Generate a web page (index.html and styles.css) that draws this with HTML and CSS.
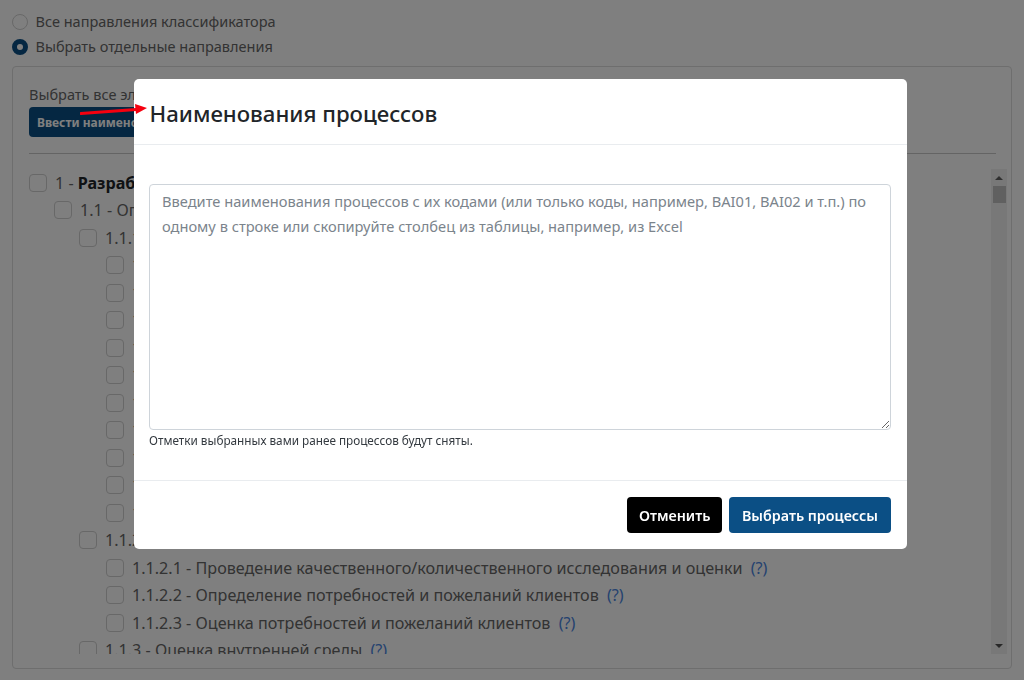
FILE: index.html
```html
<!DOCTYPE html>
<html lang="en">
<head>
<meta charset="UTF-8" />
<title>Наименования процессов</title>
<link rel="stylesheet" href="styles.css">
</head>
<body>

<main class="page">
  <label class="radio-row"><span class="radio"></span>Все направления классификатора</label>
  <label class="radio-row"><span class="radio checked"></span>Выбрать отдельные направления</label>

  <section class="panel">
    <div class="select-all">Выбрать все элементы</div>
    <button class="btn btn-blue btn-small">Ввести наименования</button>
    <hr class="divider">

    <div class="tree-wrap">
      <div class="tree">
        <div class="node"><span class="box"></span>1 - <b>Разработка видения и стратегии</b></div>
        <div class="node lvl1"><span class="box"></span>1.1 - Определение концепции бизнеса</div>
        <div class="node lvl2"><span class="box"></span>1.1.1 - Оценка внешней среды</div>
        <div class="node lvl3"><span class="box"></span>1.1.1.1 - Анализ конкуренции</div>
        <div class="node lvl3"><span class="box"></span>1.1.1.2 - Экономические тенденции</div>
        <div class="node lvl3"><span class="box"></span>1.1.1.3 - Политические вопросы</div>
        <div class="node lvl3"><span class="box"></span>1.1.1.4 - Новые технологии</div>
        <div class="node lvl3"><span class="box"></span>1.1.1.5 - Демография</div>
        <div class="node lvl3"><span class="box"></span>1.1.1.6 - Социальные изменения</div>
        <div class="node lvl3"><span class="box"></span>1.1.1.7 - Экология</div>
        <div class="node lvl3"><span class="box"></span>1.1.1.8 - Интеллектуальная собственность</div>
        <div class="node lvl3"><span class="box"></span>1.1.1.9 - Внешние риски</div>
        <div class="node lvl3"><span class="box"></span>1.1.1.10 - Внутренние риски</div>
        <div class="node lvl2"><span class="box"></span>1.1.2 - Исследование клиентов</div>
        <div class="node lvl3"><span class="box"></span>1.1.2.1 - Проведение качественного/количественного исследования и оценки <a class="hint">(?)</a></div>
        <div class="node lvl3"><span class="box"></span>1.1.2.2 - Определение потребностей и пожеланий клиентов <a class="hint">(?)</a></div>
        <div class="node lvl3"><span class="box"></span>1.1.2.3 - Оценка потребностей и пожеланий клиентов <a class="hint">(?)</a></div>
        <div class="node lvl2"><span class="box"></span>1.1.3 - Оценка внутренней среды <a class="hint">(?)</a></div>
      </div>
      <div class="scrollbar">
        <div class="scroll-btn"><span class="tri-up"></span></div>
        <div class="thumb"></div>
        <div class="scroll-space"></div>
        <div class="scroll-btn"><span class="tri-down"></span></div>
      </div>
    </div>
  </section>
</main>

<div class="backdrop"></div>

<div class="modal-wrap">
  <div class="modal">
    <div class="modal-header">
      <h2>Наименования процессов</h2>
    </div>
    <div class="modal-body">
      <textarea class="names-input" placeholder="Введите наименования процессов с их кодами (или только коды, например, BAI01, BAI02 и т.п.) по одному в строке или скопируйте столбец из таблицы, например, из Excel"></textarea>
      <div class="note">Отметки выбранных вами ранее процессов будут сняты.</div>
    </div>
    <div class="modal-footer">
      <button class="btn btn-black">Отменить</button>
      <button class="btn btn-blue">Выбрать процессы</button>
    </div>
  </div>
</div>

<!-- red arrow from the screenshot annotation -->
<svg class="arrow" width="72" height="16" viewBox="0 0 72 16">
  <path d="M1 11.5 L56 7.5" stroke="#f5000f" stroke-width="3" fill="none" stroke-linecap="round"/>
  <path d="M55 2 L67 6 L56 12 Z" fill="#f5000f"/>
</svg>

</body>
</html>
```

FILE: styles.css
```css
html,
body {
  height: 100%;
}
body {
  font-family: "Noto Sans", "Open Sans", sans-serif;
  font-size: 14.5px;
  line-height: 1.5;
  background: #fff;
  color: #212529;
  margin: 0;
  overflow: hidden;
}
.page {
  padding: 9px 12px 0;
}
.radio-row {
  display: flex;
  align-items: center;
  gap: 7.5px;
  height: 25px;
  color: #666;
}
.radio {
  width: 16px;
  height: 16px;
  border: 1px solid #d0d0d0;
  border-radius: 50%;
  box-sizing: border-box;
  background: #fff;
}
.radio.checked {
  border: 5px solid #0b4f85;
}
.panel {
  margin-top: 7px;
  height: 603px;
  border: 1px solid #dcdcdc;
  border-radius: 4px;
  box-sizing: border-box;
  padding: 17px 15px 0 16px;
}
.select-all {
  height: 23px;
  color: #666;
}
.btn {
  border: none;
  border-radius: 4px;
  color: #fff;
  font-family: "Noto Sans", sans-serif;
  font-weight: 600;
  font-size: 14.3px;
  height: 36px;
  padding: 0 13px;
}
.btn-small {
  display: block;
  font-size: 12px;
  font-weight: 700;
  height: 30px;
  padding: 0 8px;
}
.btn-black {
  background: #000;
  padding: 0 11.5px;
}
.btn-blue {
  background: #0b4f85;
}
.divider {
  border: none;
  border-top: 1px solid #c8c8c8;
  margin: 16px 0 15px;
}
.tree-wrap {
  display: flex;
  height: 485px;
  margin-right: -11px;
}
.tree {
  flex: 1;
  overflow: hidden;
  color: #666;
  font-size: 16.15px;
}
.node {
  display: flex;
  align-items: center;
  height: 27.5px;
  white-space: pre;
}
.node b {
  color: #212529;
}
.lvl1 {
  padding-left: 25px;
}
.lvl2 {
  padding-left: 50px;
}
.lvl3 {
  padding-left: 77px;
}
.box {
  flex: none;
  width: 16px;
  height: 16px;
  border: 1px solid #d0d0d0;
  border-radius: 4px;
  background: #fff;
  margin-right: 8px;
}
.hint {
  color: #4a85e0;
  margin-left: 4px;
}
.scrollbar {
  flex: none;
  width: 16px;
  background: #f1f1f1;
  display: flex;
  flex-direction: column;
  align-items: center;
}
.scroll-btn {
  flex: none;
  height: 17px;
  width: 100%;
  display: flex;
  align-items: center;
  justify-content: center;
}
.tri-up {
  border-left: 4px solid transparent;
  border-right: 4px solid transparent;
  border-bottom: 4px solid #606060;
}
.tri-down {
  border-left: 4px solid transparent;
  border-right: 4px solid transparent;
  border-top: 4px solid #505050;
}
.thumb {
  flex: none;
  width: 13px;
  height: 17px;
  background: #c1c1c1;
}
.scroll-space {
  flex: 1;
}
.backdrop {
  position: fixed;
  inset: 0;
  background: rgba(0, 0, 0, 0.5);
}
.modal-wrap {
  position: fixed;
  left: 134px;
  top: 79px;
  width: 773px;
}
.modal {
  background: #fff;
  border-radius: 5px;
  height: 470px;
  display: flex;
  flex-direction: column;
}
.modal-header {
  height: 66px;
  box-sizing: border-box;
  border-bottom: 1px solid #e9ecef;
  padding: 4px 16px 0 15.5px;
  display: flex;
  align-items: center;
}
.modal-header h2 {
  margin: 0;
  font-size: 22.2px;
  font-weight: 500;
  color: #212529;
}
.modal-body {
  flex: 1;
  padding: 39px 16px 0 15px;
  border-bottom: 1px solid #e9ecef;
}
.names-input {
  display: block;
  width: 100%;
  height: 246px;
  box-sizing: border-box;
  border: 1px solid #ced4da;
  border-radius: 4px;
  padding: 4px 12px;
  font-family: inherit;
  font-size: 14.65px;
  line-height: 25px;
  color: #495057;
  outline: none;
}
.names-input::placeholder {
  color: #7b848c;
  opacity: 1;
}
.note {
  font-size: 11.75px;
  line-height: 20px;
  color: #343a40;
}
.modal-footer {
  height: 68px;
  box-sizing: border-box;
  padding: 16px;
  display: flex;
  justify-content: flex-end;
  gap: 7px;
}
.arrow {
  position: fixed;
  left: 80px;
  top: 102px;
}
```
